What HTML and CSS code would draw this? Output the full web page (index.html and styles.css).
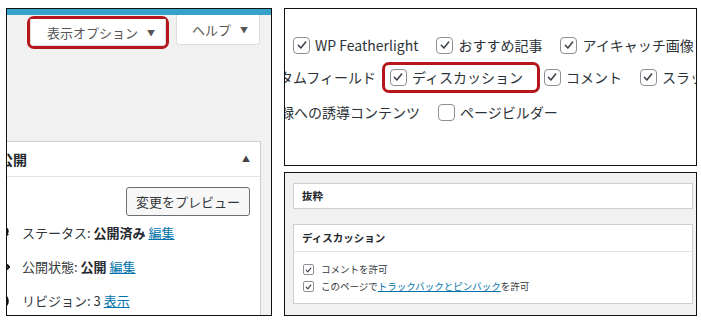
FILE: index.html
```html
<!DOCTYPE html>
<html lang="ja">
<head>
  <meta charset="UTF-8">
  <meta name="viewport" content="width=device-width, initial-scale=1.0">
  <title>表示オプション — ディスカッション</title>
  <link rel="stylesheet" href="styles.css">
</head>
<body>

  <div class="shot">

    <!-- 左: 投稿編集画面 -->
    <div class="panel panel-left">
      <div class="adminbar"></div>

      <div class="screen-meta">
        <div class="highlight highlight--tab">
          <button class="meta-tab meta-tab--options">表示オプション <span class="arrow">▼</span></button>
        </div>
        <button class="meta-tab meta-tab--help">ヘルプ <span class="arrow">▼</span></button>
      </div>

      <div class="postbox publish">
        <div class="postbox__head">
          <h2>公開</h2>
          <span class="toggle">▲</span>
        </div>
        <div class="postbox__body">
          <div class="preview-row">
            <button class="btn">変更をプレビュー</button>
          </div>

          <div class="misc">
            <svg class="misc__icon" viewBox="0 0 20 20"><circle cx="14" cy="8" r="4.5" fill="#111"/><path d="M9 11h10l-3 3v5h-2v-5z" fill="#111"/></svg>
            <span>ステータス: <b>公開済み</b> <a href="#">編集</a></span>
          </div>
          <div class="misc">
            <svg class="misc__icon" viewBox="0 0 20 20"><path d="M1 10Q10 1 19 10Q10 19 1 10z" fill="none" stroke="#111" stroke-width="2.4"/><circle cx="10" cy="10" r="3" fill="#111"/></svg>
            <span>公開状態: <b>公開</b> <a href="#">編集</a></span>
          </div>
          <div class="misc">
            <svg class="misc__icon" viewBox="0 0 20 20"><circle cx="10" cy="10" r="7.5" fill="none" stroke="#111" stroke-width="2.4"/><path d="M10 5v5l3 2" fill="none" stroke="#111" stroke-width="2"/></svg>
            <span>リビジョン: 3 <a href="#">表示</a></span>
          </div>
        </div>
      </div>
    </div>

    <div class="col-right">

      <!-- 右上: 表示オプションの項目 -->
      <div class="panel panel-options">
        <div class="opt-row">
          <label class="opt"><span class="cb"><svg viewBox="0 0 16 16"><path d="M3.8 8.3l2.9 3.1 5.5-6.8"/></svg></span>WP Featherlight</label>
          <label class="opt"><span class="cb"><svg viewBox="0 0 16 16"><path d="M3.8 8.3l2.9 3.1 5.5-6.8"/></svg></span>おすすめ記事</label>
          <label class="opt"><span class="cb"><svg viewBox="0 0 16 16"><path d="M3.8 8.3l2.9 3.1 5.5-6.8"/></svg></span>アイキャッチ画像</label>
        </div>
        <div class="opt-row">
          <span class="opt-cut opt-cut--custom">カスタムフィールド</span>
          <div class="highlight highlight--opt">
            <label class="opt"><span class="cb"><svg viewBox="0 0 16 16"><path d="M3.8 8.3l2.9 3.1 5.5-6.8"/></svg></span>ディスカッション</label>
          </div>
          <label class="opt"><span class="cb"><svg viewBox="0 0 16 16"><path d="M3.8 8.3l2.9 3.1 5.5-6.8"/></svg></span>コメント</label>
          <label class="opt"><span class="cb"><svg viewBox="0 0 16 16"><path d="M3.8 8.3l2.9 3.1 5.5-6.8"/></svg></span>スラッグ</label>
        </div>
        <div class="opt-row opt-row--last">
          <span class="opt-cut opt-cut--lead">登録への誘導コンテンツ</span>
          <label class="opt"><span class="cb"></span>ページビルダー</label>
        </div>
      </div>

      <!-- 右下: ディスカッション ボックス -->
      <div class="panel panel-boxes">
        <div class="box box--closed">
          <div class="box__head">抜粋</div>
        </div>
        <div class="box">
          <div class="box__head box__head--line">ディスカッション</div>
          <div class="box__body">
            <label class="small-opt"><span class="cb cb--small"><svg viewBox="0 0 16 16"><path d="M3.8 8.3l2.9 3.1 5.5-6.8"/></svg></span><span>コメントを許可</span></label>
            <label class="small-opt"><span class="cb cb--small"><svg viewBox="0 0 16 16"><path d="M3.8 8.3l2.9 3.1 5.5-6.8"/></svg></span><span>このページで<a href="#">トラックバックとピンバック</a>を許可</span></label>
          </div>
        </div>
      </div>

    </div>
  </div>

</body>
</html>
```

FILE: styles.css
```css
:root{
  --text:#32373c;
  --link:#0073aa;
  --line:#ccd0d4;
  --wp-bg:#f1f1f1;
  --mark:#b5161c;
}
*{margin:0;padding:0;box-sizing:border-box;}
body{background:#fff;color:var(--text);font-family:"Noto Sans CJK JP","Noto Sans",sans-serif;line-height:1.2;}
a{color:var(--link);}
b{font-weight:700;color:#23282d;}

.shot{display:flex;gap:12px;padding:8px 0 0 6px;}
.panel{border:1px solid #111;overflow:hidden;}
.panel-left{width:266px;height:308px;background:var(--wp-bg);}
.col-right{width:413px;display:flex;flex-direction:column;gap:6px;}
.panel-options{height:158px;background:#fff;}
.panel-boxes{height:144px;background:var(--wp-bg);}

/* 赤枠 */
.highlight{border:3px solid var(--mark);border-radius:7px;flex-shrink:0;}

/* 左パネル */
.adminbar{height:6px;background:#35a2c9;}
.screen-meta{height:34px;display:flex;justify-content:flex-end;align-items:flex-start;gap:7px;padding-right:11px;}
.highlight--tab{margin-top:1px;width:142px;height:33px;}
.meta-tab{display:flex;align-items:center;justify-content:center;gap:9px;background:#fff;border:1px solid #ddd;border-top:none;
          border-radius:0 0 4px 4px;font:13px "Noto Sans CJK JP",sans-serif;color:#555;}
.meta-tab--options{width:100%;height:27px;padding-left:6px;}
.meta-tab--help{width:84px;height:30px;padding-left:4px;}
.arrow{font-size:8px;color:#555;}

.postbox{background:#fff;border:1px solid var(--line);}
.publish{margin:92px 10px 0 -2px;height:200px;}
.postbox__head{height:35px;display:flex;align-items:center;justify-content:space-between;border-bottom:1px solid #e2e4e7;}
.postbox__head h2{margin-left:-7px;font-size:14px;line-height:1;color:#23282d;}
.toggle{font-size:8px;color:#444;margin-right:10px;}
.preview-row{display:flex;justify-content:flex-end;padding:10px 10px 0 0;}
.btn{height:29px;padding:0 9px;background:#f7f7f7;border:1px solid #6b7177;border-radius:3px;
     font:13px "Noto Sans CJK JP",sans-serif;color:#32373c;}
.misc{height:34px;display:flex;align-items:center;font-size:13px;white-space:nowrap;}
.misc__icon{width:18px;height:18px;margin:0 12px 0 -14px;flex-shrink:0;}

/* 右上: 表示オプション */
.opt-row{height:32px;display:flex;align-items:center;padding-left:8px;white-space:nowrap;font-size:14px;color:#2c3338;}
.opt-row:first-child{margin-top:20px;}
.opt-row--last{margin-top:3px;}
.opt{display:flex;align-items:center;gap:5px;flex-shrink:0;margin-right:18px;}
.cb{width:17px;height:17px;border:1px solid #8c8f94;border-radius:4px;background:#fff;display:flex;align-items:center;justify-content:center;flex-shrink:0;}
.cb svg{width:14px;height:14px;fill:none;stroke:#3c434a;stroke-width:1.8;stroke-linecap:round;stroke-linejoin:round;}
.opt-cut{flex-shrink:0;}
.opt-cut--custom{margin:0 6px 0 -42px;}
.opt-cut--lead{margin:0 18px 0 -27px;}
.highlight--opt{height:31px;display:flex;align-items:center;padding:0 0 0 5px;margin-right:4px;}
.highlight--opt .opt{margin-right:14px;}

/* 右下: メタボックス */
.box{background:#fff;border:1px solid var(--line);margin:0 3px 0 8px;}
.box--closed{margin-top:10px;margin-bottom:15px;height:26px;}
.box__head{height:24px;display:flex;align-items:center;padding-left:8px;font-size:10.5px;font-weight:700;color:#23282d;}
.box__head--line{height:27px;border-bottom:1px solid #e2e4e7;}
.box__body{padding:9px 0 8px 9px;}
.small-opt{height:17px;display:flex;align-items:center;gap:7px;font-size:9.5px;white-space:nowrap;}
.cb--small{width:11px;height:11px;border-radius:2px;}
.cb--small svg{width:10px;height:10px;stroke-width:2;}
```
